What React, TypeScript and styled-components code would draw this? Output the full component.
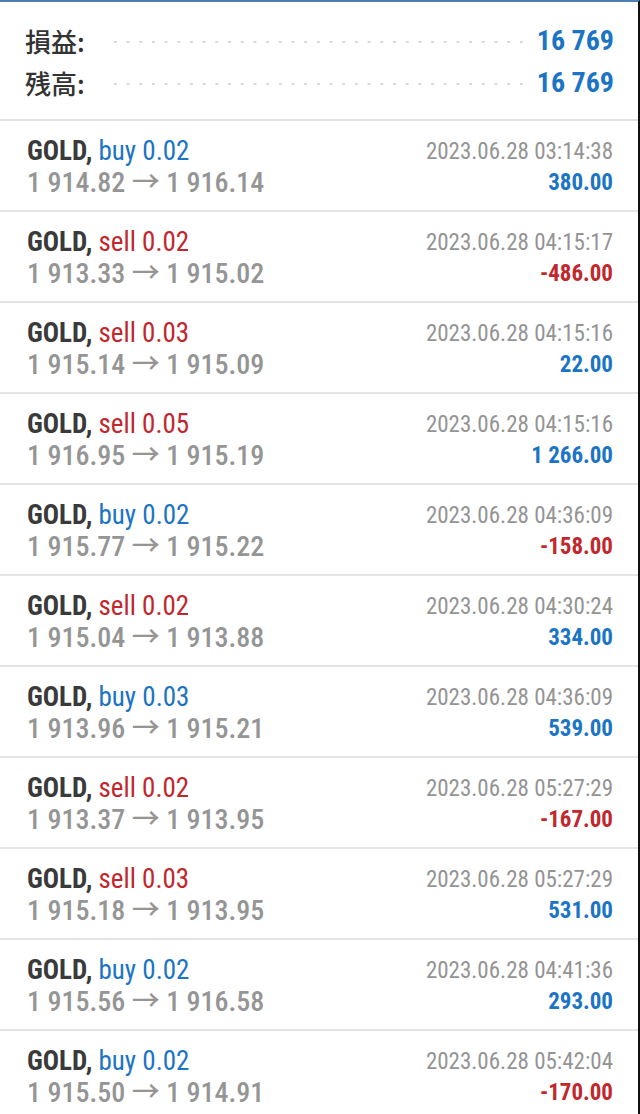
import styled, { createGlobalStyle } from "styled-components";

const GlobalStyle = createGlobalStyle`
  html, body {
    margin: 0;
    padding: 0;
    background: #ffffff;
  }
  body {
    font-family: "Roboto Condensed", Roboto, "Noto Sans CJK JP", sans-serif;
  }
`;

const BLUE = "#1b74c4";
const RED = "#c1272d";

type Trade = {
  side: "buy" | "sell";
  volume: string;
  open: string;
  close: string;
  time: string;
  profit: string;
};

const trades: Trade[] = [
  { side: "buy", volume: "0.02", open: "1 914.82", close: "1 916.14", time: "2023.06.28 03:14:38", profit: "380.00" },
  { side: "sell", volume: "0.02", open: "1 913.33", close: "1 915.02", time: "2023.06.28 04:15:17", profit: "-486.00" },
  { side: "sell", volume: "0.03", open: "1 915.14", close: "1 915.09", time: "2023.06.28 04:15:16", profit: "22.00" },
  { side: "sell", volume: "0.05", open: "1 916.95", close: "1 915.19", time: "2023.06.28 04:15:16", profit: "1 266.00" },
  { side: "buy", volume: "0.02", open: "1 915.77", close: "1 915.22", time: "2023.06.28 04:36:09", profit: "-158.00" },
  { side: "sell", volume: "0.02", open: "1 915.04", close: "1 913.88", time: "2023.06.28 04:30:24", profit: "334.00" },
  { side: "buy", volume: "0.03", open: "1 913.96", close: "1 915.21", time: "2023.06.28 04:36:09", profit: "539.00" },
  { side: "sell", volume: "0.02", open: "1 913.37", close: "1 913.95", time: "2023.06.28 05:27:29", profit: "-167.00" },
  { side: "sell", volume: "0.03", open: "1 915.18", close: "1 913.95", time: "2023.06.28 05:27:29", profit: "531.00" },
  { side: "buy", volume: "0.02", open: "1 915.56", close: "1 916.58", time: "2023.06.28 04:41:36", profit: "293.00" },
  { side: "buy", volume: "0.02", open: "1 915.50", close: "1 914.91", time: "2023.06.28 05:42:04", profit: "-170.00" },
];

const Screen = styled.div`
  width: 638px;
  height: 1112px;
  overflow: hidden;
  background: #ffffff;
  border-top: 2px solid #4d7fb1;
  border-right: 2px solid #111111;
`;

const Summary = styled.section`
  display: flex;
  flex-direction: column;
  padding: 17px 24px 16px 25px;
  border-bottom: 2px solid #e2e2e2;
`;

const SummaryRow = styled.div`
  display: flex;
  align-items: center;
  height: 42px;
`;

const Label = styled.span`
  font-family: "Noto Sans CJK JP", sans-serif;
  font-size: 26px;
  font-weight: 500;
  color: #333333;
  width: 84px;
`;

// dotted leader between label and value
const Leader = styled.span`
  flex: 1;
  height: 4px;
  margin: 4px 8px 0 0;
  background-image: radial-gradient(circle, #d9d9d9 1.1px, transparent 1.4px);
  background-size: 12.7px 4px;
  background-repeat: repeat-x;
`;

const SummaryValue = styled.span`
  font-size: 28px;
  font-weight: 700;
  color: ${BLUE};
`;

const TradeRow = styled.div`
  display: flex;
  justify-content: space-between;
  align-items: center;
  box-sizing: border-box;
  height: 91px;
  padding: 3px 25px 0 27px;
  border-bottom: 2px solid #e4e4e4;
`;

const Column = styled.div<{ $right?: boolean }>`
  display: flex;
  flex-direction: column;
  align-items: ${(p) => (p.$right ? "flex-end" : "flex-start")};
`;

const Title = styled.div`
  font-size: 27px;
  line-height: 31px;
  white-space: nowrap;
`;

const Symbol = styled.span`
  font-weight: 700;
  color: #3a3a3a;
`;

const Side = styled.span<{ $sell: boolean }>`
  color: ${(p) => (p.$sell ? RED : BLUE)};
`;

const Prices = styled.div`
  font-size: 28px;
  line-height: 31px;
  font-weight: 500;
  color: #959595;
  white-space: nowrap;
`;

const Time = styled.div`
  font-size: 23px;
  line-height: 31px;
  color: #949494;
  white-space: nowrap;
`;

const Profit = styled.div<{ $loss: boolean }>`
  font-size: 23px;
  line-height: 31px;
  font-weight: 700;
  color: ${(p) => (p.$loss ? RED : BLUE)};
  white-space: nowrap;
`;

export default function App() {
  return (
    <>
      <GlobalStyle />
      <Screen>
        <Summary>
          <SummaryRow>
            <Label>損益:</Label>
            <Leader />
            <SummaryValue>16 769</SummaryValue>
          </SummaryRow>
          <SummaryRow>
            <Label>残高:</Label>
            <Leader />
            <SummaryValue>16 769</SummaryValue>
          </SummaryRow>
        </Summary>
        {trades.map((t, i) => (
          <TradeRow key={i}>
            <Column>
              <Title>
                <Symbol>GOLD,</Symbol>{" "}
                <Side $sell={t.side === "sell"}>
                  {t.side} {t.volume}
                </Side>
              </Title>
              <Prices>
                {t.open} → {t.close}
              </Prices>
            </Column>
            <Column $right>
              <Time>{t.time}</Time>
              <Profit $loss={t.profit.startsWith("-")}>{t.profit}</Profit>
            </Column>
          </TradeRow>
        ))}
      </Screen>
    </>
  );
}
